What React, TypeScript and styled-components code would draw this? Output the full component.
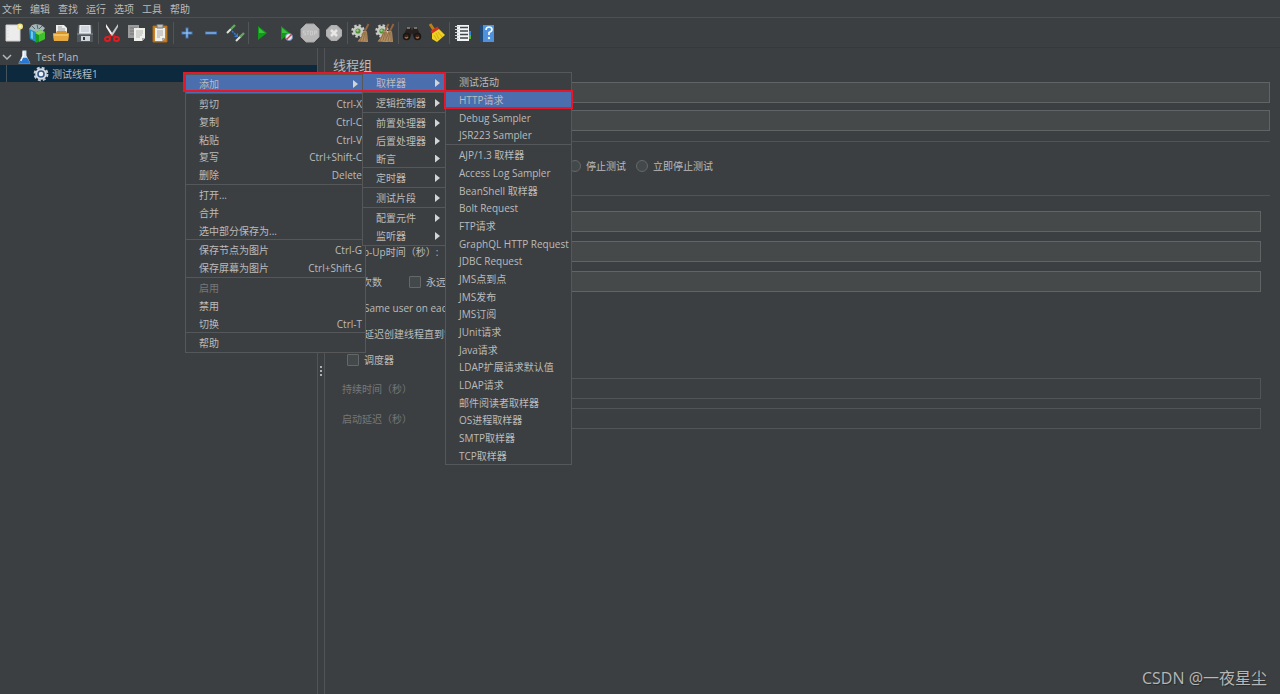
import React from 'react';
import styled, { createGlobalStyle, css } from 'styled-components';

const GlobalStyle = createGlobalStyle`
  *, *::before, *::after { box-sizing: border-box; }
  body {
    margin: 0;
    background: #3c3f41;
    color: #bbbbbb;
    font: 10px/16px "Open Sans", "Noto Sans CJK SC", sans-serif;
  }
  button, input { font: inherit; color: inherit; margin: 0; }
  button { background: none; border: 0; padding: 0; text-align: left; white-space: nowrap; }
`;

const Page = styled.div`
  position: relative;
  display: flex;
  flex-direction: column;
  min-height: 100vh;
  overflow: hidden;
`;

const MenuBar = styled.nav`
  display: flex;
  height: 18px;
  padding-left: 2px;
  border-bottom: 1px solid #4d5052;
`;

const MenuBarButton = styled.button`
  width: 28px;
`;

const Toolbar = styled.div`
  display: flex;
  align-items: center;
  height: 30px;
  padding-left: 1px;
  border-bottom: 1px solid #36393b;
`;

const ToolButton = styled.button`
  display: flex;
  align-items: center;
  justify-content: center;
  width: 24px;
  height: 24px;
`;

const ToolDivider = styled.span`
  width: 1px;
  height: 22px;
  margin: 0 1px;
  background: #525557;
`;

const Main = styled.main`
  display: flex;
  flex: 1;
`;

const Tree = styled.ul`
  flex: none;
  width: 317px;
  margin: 0;
  padding: 0;
  list-style: none;
`;

const TreeRow = styled.li<{ $child?: boolean }>`
  display: flex;
  align-items: center;
  gap: 4px;
  height: 17px;
  padding-left: 2px;
  ${(p) =>
    p.$child &&
    css`
      gap: 3px;
      padding-left: 6px;
      background: #0d293e;
    `}
`;

const TreeGuide = styled.span`
  width: 1px;
  height: 100%;
  margin-right: 23px;
  background: #46535c;
`;

const Splitter = styled.div`
  display: flex;
  flex: none;
  flex-direction: column;
  align-items: center;
  justify-content: center;
  gap: 2px;
  width: 8px;
  border: solid #525557;
  border-width: 0 1px;
`;

const SplitterDot = styled.span`
  width: 2px;
  height: 2px;
  background: #aeb0b1;
`;

const Panel = styled.section`
  flex: 1;
  min-width: 0;
  padding: 7px 10px 0 8px;
`;

const Title = styled.h1`
  margin: 0 0 7px;
  font-size: 13px;
  line-height: 20px;
  font-weight: 400;
`;

const Header = styled.div`
  display: grid;
  gap: 7px;
  padding-left: 120px;
`;

const TextField = styled.input`
  display: block;
  flex: 1;
  width: 100%;
  min-width: 0;
  height: 21px;
  padding: 0 4px;
  border: 1px solid #616464;
  border-radius: 0;
  background: #45494a;
  outline: 0;
  &:disabled {
    border-color: #525557;
    background: transparent;
  }
`;

const ActionGroup = styled.div`
  display: flex;
  align-items: center;
  gap: 10px;
  height: 55px;
  margin-top: 10px;
  padding: 0 0 6px 236px;
  border: solid #515355;
  border-width: 1px 0;
`;

const Choice = styled.label`
  display: flex;
  align-items: center;
  gap: 5px;
  white-space: nowrap;
`;

const Radio = styled.input`
  appearance: none;
  width: 12px;
  height: 12px;
  border: 1px solid #646868;
  border-radius: 50%;
  background: #43494a;
`;

const Checkbox = styled.input`
  appearance: none;
  width: 12px;
  height: 12px;
  border: 1px solid #646868;
  border-radius: 1px;
  background: #43494a;
`;

const Properties = styled.div`
  display: grid;
  gap: 9px;
  padding: 15px 9px 0;
`;

const FieldRow = styled.div<{ $disabled?: boolean }>`
  display: flex;
  align-items: center;
  height: 21px;
  color: ${(p) => (p.$disabled ? '#777777' : '#bbbbbb')};
`;

const FieldLabel = styled.label<{ $narrow?: boolean }>`
  flex: none;
  width: ${(p) => (p.$narrow ? 67 : 110)}px;
  white-space: nowrap;
`;

const Forever = styled(Choice)`
  width: 43px;
`;

const OptionList = styled.div`
  display: grid;
  grid-auto-rows: 26px;
  margin: -6px 0 -4px;
  padding-left: 5px;
`;

const Popup = styled.div<{ $left: number; $top: number; $width: number }>`
  position: absolute;
  left: ${(p) => p.$left}px;
  top: ${(p) => p.$top}px;
  width: ${(p) => p.$width}px;
  border: 1px solid #555759;
  background: #3c3f41;
`;

const PopupGroup = styled.div`
  display: grid;
  grid-auto-rows: 18px 18px 17px;
  & + & {
    padding-top: 1px;
    border-top: 1px solid #55585a;
  }
`;

const PopupItem = styled.button<{ $active?: boolean }>`
  display: flex;
  align-items: center;
  justify-content: space-between;
  padding: 0 3px 0 13px;
  background: ${(p) => (p.$active ? '#4b6eaf' : 'transparent')};
  &:disabled { color: #777777; }
`;

const Arrow = styled.span`
  width: 5px;
  height: 8px;
  margin-right: 4px;
  background: #d3d4d5;
  clip-path: polygon(0 0, 100% 50%, 0 100%);
`;

const Highlight = styled.div<{ $left: number; $top: number; $width: number; $height: number }>`
  position: absolute;
  left: ${(p) => p.$left}px;
  top: ${(p) => p.$top}px;
  width: ${(p) => p.$width}px;
  height: ${(p) => p.$height}px;
  border: 2px solid #e5182a;
  pointer-events: none;
`;

const Watermark = styled.div`
  position: absolute;
  right: 13px;
  bottom: 4px;
  color: #b4b6b7;
  font-size: 16px;
  line-height: 24px;
  text-shadow: 1px 1px 1px #2a2c2d;
`;

const Svg = styled.svg`
  display: block;
  flex: none;
`;

const Icon = ({ children, size = 20 }: { children: React.ReactNode; size?: number }) => (
  <Svg width={size} height={size} viewBox="0 0 20 20" aria-hidden="true">
    {children}
  </Svg>
);

const Gear = () => (
  <>
    <circle cx="7" cy="8" r="5" fill="#c9cbc6" />
    <circle cx="7" cy="8" r="5.500" fill="none" stroke="#c9cbc6" strokeWidth="2.500" strokeDasharray="2.400 1.900" />
    <circle cx="7" cy="8" r="2.600" fill="#4e9135" />
    <circle cx="6.500" cy="7.500" r="1.200" fill="#a3c88f" />
  </>
);

const Brush = ({ x = 0 }: { x?: number }) => (
  <g transform={`translate(${x} 0)`}>
    <path d="M17.500 1 14 8" stroke="#93643f" strokeWidth="1.800" />
    <path d="M12.500 7.500 16 8.500 17 19 6.500 18.500 10 14Z" fill="#b58e62" />
    <path d="M13 9 9 18M14 9 12 18M15 9 15 18" stroke="#80613d" strokeWidth=".7" />
  </g>
);

const icons: Record<string, React.ReactNode> = {
  new: (
    <>
      <path d="M3 2h14v16H3z" fill="#ececec" stroke="#cfcfcf" />
      <path d="M5 4v12" stroke="#d5d5d5" strokeDasharray="1 2" />
      <circle cx="17" cy="3.500" r="3" fill="#f2e37c" />
      <circle cx="17" cy="3.500" r="1.200" fill="#fffbe0" />
    </>
  ),
  templates: (
    <>
      <path d="M2 6 5 2l4-1 5 1 4 3-3 4-9 1Z" fill="#a4b6b7" />
      <path d="M5 3 8 6M10 1.500 11 6M15 3 12 6" stroke="#4f6265" />
      <path d="M2 6 9 9v10l-6-3Z" fill="#2592cc" />
      <path d="m4 8 2 1v7l-2-1Z" fill="#6cc8ee" />
      <path d="m8 10 5-3 5 2v7l-9 4Z" fill="#169c1f" />
      <path d="m8 10 5-3 5 2-6 3Z" fill="#8ed35d" />
      <path d="m12 12 6-3v7l-6 3Z" fill="#3fc02c" />
    </>
  ),
  open: (
    <>
      <path d="M5 2h8l3 3v8H5Z" fill="#eeeeed" />
      <path d="M7 4h4M7 6h7M7 8h7" stroke="#9b9b9b" />
      <path d="M2 10h3l1-2h9l1 2h2l-1 8H3Z" fill="#d8932a" />
      <path d="M2 11h16l-1 7H3Z" fill="#e5a940" />
      <path d="M3 12h14" stroke="#ffdc83" />
    </>
  ),
  save: (
    <>
      <path d="M3 2h14l1 9v8H2v-8Z" fill="#50575d" />
      <path d="M4.500 2h11l.5 9H4Z" fill="#e6e9ed" />
      <path d="M6 4h8M6 6h8M6 8h8" stroke="#b9c0c6" />
      <path d="M2 11h16" stroke="#8b949c" />
      <path d="M6 13h9v5H6Z" fill="#cfd5d9" />
      <path d="M8 14h2v3H8Z" fill="#343b42" />
    </>
  ),
  cut: (
    <>
      <path d="m4 1 7.500 11-2 1L4 4Z" fill="#f3f3f3" />
      <path d="m16 1-7.500 11 2 1L16 4Z" fill="#c7c7c7" />
      <path d="m9 12-2 2M11 12l2 2" stroke="#d0181c" strokeWidth="2.500" />
      <ellipse cx="5.500" cy="16" rx="2.500" ry="2" fill="none" stroke="#e01c21" strokeWidth="2" />
      <ellipse cx="14.500" cy="16" rx="2.500" ry="2" fill="none" stroke="#e01c21" strokeWidth="2" />
    </>
  ),
  copy: (
    <>
      <path d="M2 2h11v13H2Z" fill="#9a9b9a" />
      <path d="M4 5h7M4 8h7M4 11h7" stroke="#777" />
      <path d="M8 5h11v10l-3 3H8Z" fill="#efefec" />
      <path d="M10 8h7M10 10h7M10 12h6M10 14h4" stroke="#b5b5b1" />
      <path d="M16 18v-3h3Z" fill="#a7a7a4" />
    </>
  ),
  paste: (
    <>
      <path d="M3 3h14v16H3Z" fill="#c98426" stroke="#a5681b" />
      <path d="M5 5h10v10l-3 3H5Z" fill="#efefec" />
      <path d="M7 1.500h6V5H7Z" fill="#c1c1bd" stroke="#777" />
      <path d="M7 8h6M7 10h6M7 12h6M7 14h3" stroke="#a8a8a5" />
      <path d="M12 18v-3h3Z" fill="#aaa" />
    </>
  ),
  plus: (
    <>
      <path d="M10 4.500v11M4.500 10h11" stroke="#3f77bb" strokeWidth="3" />
      <path d="M10 5.500v9M5.500 10h9" stroke="#a5cdf3" strokeWidth="1" />
    </>
  ),
  minus: (
    <>
      <path d="M4 10h12" stroke="#3f77bb" strokeWidth="3" />
      <path d="M5 10h10" stroke="#9fc6ec" strokeWidth="1" />
    </>
  ),
  toggle: (
    <>
      <path d="m2 10 4-4M11 18l5-5" stroke="#dce2dc" strokeWidth="2" />
      <path d="m6 6 4-4M15 14l4-4" stroke="#63a85b" strokeWidth="2.400" />
      <path d="m7 8 4 4" stroke="#2e7ede" strokeWidth="1.500" strokeDasharray="2 1" />
      <path d="m13 10v4H9Z" fill="#2e7ede" />
    </>
  ),
  start: (
    <>
      <path d="m6 3 9 7-9 7Z" fill="#119b1b" />
      <path d="m7 5 6 5H7Z" fill="#3dc23f" />
    </>
  ),
  startNoPause: (
    <>
      <path d="m5 3 9 7-9 7Z" fill="#119b1b" />
      <path d="m6 5 6 5H6Z" fill="#3dc23f" />
      <circle cx="13" cy="14" r="3.500" fill="#e4edf5" stroke="#698fbb" />
      <path d="m10.500 16.500 5-5" stroke="#d83942" strokeWidth="1.500" />
    </>
  ),
  stop: (
    <>
      <path d="M6 1h8l5 5v8l-5 5H6l-5-5V6Z" fill="#b7b7b7" stroke="#a6a6a6" />
      <path d="M5.500 8h-2v2h2v2h-2M6.500 8h3M8 8v4M10.500 8h2v4h-2ZM14.500 12V8h2v2h-2" fill="none" stroke="#cfcfcf" strokeWidth=".8" />
    </>
  ),
  shutdown: (
    <>
      <path d="M7 2.500h6L17.500 7v6L13 17.500H7L2.500 13V7Z" fill="#b6b6b6" stroke="#adadad" />
      <path d="m7 7 6 6M13 7l-6 6" stroke="#e6e6e6" strokeWidth="2.500" />
    </>
  ),
  clear: (
    <>
      <Gear />
      <Brush />
    </>
  ),
  clearAll: (
    <>
      <Gear />
      <Brush x={-4} />
      <Brush x={1} />
    </>
  ),
  search: (
    <>
      <path d="M5 5h4l1 3 1-3h4l4 8-3 4-4-2-2-5-2 5-4 2-3-4Z" fill="#26211e" />
      <path d="M5 5h3M12 5h3" stroke="#77716c" strokeWidth="2" />
      <circle cx="4.500" cy="13.500" r="3" fill="#372317" stroke="#181717" strokeWidth="1.500" />
      <circle cx="15.500" cy="13.500" r="3" fill="#372317" stroke="#181717" strokeWidth="1.500" />
      <path d="M3 14q1 2 3 0M14 14q1 2 3 0" fill="none" stroke="#b56830" strokeWidth="1.300" />
    </>
  ),
  broom: (
    <>
      <path d="m4 1 4 6" stroke="#b78018" strokeWidth="3" />
      <path d="m4.500 8 7-4.500 1.500 2.500-7 4.500Z" fill="#d42f22" />
      <path d="m6 10.500 7-4.500 6 6-8 7-5-3Z" fill="#f0d021" />
      <path d="m10 10 3 6M12 9l4 5M8 12l3 5" stroke="#d0ac16" />
    </>
  ),
  functions: (
    <>
      <path d="M4 2h12v16H4Z" fill="#f1f3f5" />
      <path d="M7 4.500h8M7 8h8M7 11.500h8M7 15h8" stroke="#3f454a" strokeWidth="1.500" />
      <path d="M2 3.500h4M2 6.500h4M2 9.500h4M2 12.500h4M2 15.500h4" stroke="#cbd1d6" />
      <path d="M16 8h2v4h-2Z" fill="#3683d4" />
      <path d="M16 12h2v4h-2Z" fill="#56b638" />
    </>
  ),
  help: (
    <>
      <path d="M4 2h13v17H4Z" fill="#4d91df" />
      <path d="M3 2h3v17H3Z" fill="#234976" />
      <path d="M9 7q0-3 3-3t3 2.500q0 2-3 3V12" fill="none" stroke="#f4f8ff" strokeWidth="1.700" />
      <circle cx="12" cy="15" r="1.200" fill="#f4f8ff" />
    </>
  ),
};

const toolGroups: [string, string][][] = [
  [['new', '新建'], ['templates', '模板'], ['open', '打开'], ['save', '保存']],
  [['cut', '剪切'], ['copy', '复制'], ['paste', '粘贴']],
  [['plus', '展开'], ['minus', '收起'], ['toggle', '切换']],
  [['start', '启动'], ['startNoPause', '无间隔启动'], ['stop', '停止'], ['shutdown', '关闭']],
  [['clear', '清除'], ['clearAll', '清除全部']],
  [['search', '查找'], ['broom', '重置查找']],
  [['functions', '函数助手'], ['help', '帮助']],
];

interface Entry {
  text: string;
  keys?: string;
  sub?: boolean;
  active?: boolean;
  disabled?: boolean;
}

const sub = (text: string, active = false): Entry => ({ text, sub: true, active });
const item = (text: string, keys?: string): Entry => ({ text, keys });

const contextMenu: Entry[][] = [
  [sub('添加', true)],
  [
    item('剪切', 'Ctrl-X'),
    item('复制', 'Ctrl-C'),
    item('粘贴', 'Ctrl-V'),
    item('复写', 'Ctrl+Shift-C'),
    item('删除', 'Delete'),
  ],
  [item('打开...'), item('合并'), item('选中部分保存为...')],
  [item('保存节点为图片', 'Ctrl-G'), item('保存屏幕为图片', 'Ctrl+Shift-G')],
  [{ text: '启用', disabled: true }, item('禁用'), item('切换', 'Ctrl-T')],
  [item('帮助')],
];

const addMenu: Entry[][] = [
  [sub('取样器', true)],
  [sub('逻辑控制器')],
  [sub('前置处理器'), sub('后置处理器'), sub('断言')],
  [sub('定时器')],
  [sub('测试片段')],
  [sub('配置元件'), sub('监听器')],
];

const samplerMenu: Entry[][] = [
  [item('测试活动'), { text: 'HTTP请求', active: true }, item('Debug Sampler'), item('JSR223 Sampler')],
  [
    'AJP/1.3 取样器',
    'Access Log Sampler',
    'BeanShell 取样器',
    'Bolt Request',
    'FTP请求',
    'GraphQL HTTP Request',
    'JDBC Request',
    'JMS点到点',
    'JMS发布',
    'JMS订阅',
    'JUnit请求',
    'Java请求',
    'LDAP扩展请求默认值',
    'LDAP请求',
    '邮件阅读者取样器',
    'OS进程取样器',
    'SMTP取样器',
    'TCP取样器',
  ].map((text) => item(text)),
];

interface MenuProps {
  groups: Entry[][];
  left: number;
  top: number;
  width: number;
}

const Menu = ({ groups, left, top, width }: MenuProps) => (
  <Popup role="menu" $left={left} $top={top} $width={width}>
    {groups.map((entries, index) => (
      <PopupGroup key={index}>
        {entries.map((entry) => (
          <PopupItem key={entry.text} role="menuitem" $active={entry.active} disabled={entry.disabled}>
            <span>{entry.text}</span>
            {entry.keys && <span>{entry.keys}</span>}
            {entry.sub && <Arrow />}
          </PopupItem>
        ))}
      </PopupGroup>
    ))}
  </Popup>
);

export default function App() {
  return (
    <Page>
      <GlobalStyle />
      <MenuBar>
        {['文件', '编辑', '查找', '运行', '选项', '工具', '帮助'].map((name) => (
          <MenuBarButton key={name}>{name}</MenuBarButton>
        ))}
      </MenuBar>

      <Toolbar>
        {toolGroups.map((group, index) => (
          <React.Fragment key={index}>
            {index > 0 && <ToolDivider />}
            {group.map(([icon, label]) => (
              <ToolButton key={icon} aria-label={label}>
                <Icon>{icons[icon]}</Icon>
              </ToolButton>
            ))}
          </React.Fragment>
        ))}
      </Toolbar>

      <Main>
        <Tree>
          <TreeRow>
            <Icon size={10}>
              <path d="m2 6 8 8 8-8" fill="none" stroke="#b5b7b8" strokeWidth="3" />
            </Icon>
            <Icon size={16}>
              <path d="M8 2h5v6l5 10H3L8 8Z" fill="#dbe9f4" />
              <path d="m7 11h7l4 7H3Z" fill="#2878d2" />
              <path d="M9 3v6l-3 6" fill="none" stroke="#fff" strokeWidth="1.500" />
            </Icon>
            <span>Test Plan</span>
          </TreeRow>
          <TreeRow $child>
            <TreeGuide />
            <Icon size={16}>
              <circle cx="10" cy="10" r="8" fill="none" stroke="#c6ced8" strokeWidth="2.500" strokeDasharray="3.600 2.680" />
              <circle cx="10" cy="10" r="6" fill="#355785" stroke="#d5dbe2" strokeWidth="2.500" />
              <circle cx="10" cy="10" r="2.800" fill="#eef2f7" />
            </Icon>
            <span>测试线程1</span>
          </TreeRow>
        </Tree>

        <Splitter>
          <SplitterDot />
          <SplitterDot />
          <SplitterDot />
        </Splitter>

        <Panel>
          <Title>线程组</Title>
          <Header>
            <TextField aria-label="名称" />
            <TextField aria-label="注释" />
          </Header>

          <ActionGroup>
            <Choice>
              <Radio type="radio" name="on-error" />
              停止测试
            </Choice>
            <Choice>
              <Radio type="radio" name="on-error" />
              立即停止测试
            </Choice>
          </ActionGroup>

          <Properties>
            <FieldRow>
              <FieldLabel />
              <TextField aria-label="线程数" />
            </FieldRow>
            <FieldRow>
              <FieldLabel htmlFor="ramp-up">Ramp-Up时间（秒）:</FieldLabel>
              <TextField id="ramp-up" />
            </FieldRow>
            <FieldRow>
              <FieldLabel htmlFor="loops" $narrow>循环次数</FieldLabel>
              <Forever>
                <Checkbox type="checkbox" />
                永远
              </Forever>
              <TextField id="loops" />
            </FieldRow>
            <OptionList>
              <Choice>
                <Checkbox type="checkbox" />
                Same user on each iteration
              </Choice>
              <Choice>
                <Checkbox type="checkbox" />
                延迟创建线程直到需要
              </Choice>
              <Choice>
                <Checkbox type="checkbox" />
                调度器
              </Choice>
            </OptionList>
            <FieldRow $disabled>
              <FieldLabel htmlFor="duration">持续时间（秒）</FieldLabel>
              <TextField id="duration" disabled />
            </FieldRow>
            <FieldRow $disabled>
              <FieldLabel htmlFor="delay">启动延迟（秒）</FieldLabel>
              <TextField id="delay" disabled />
            </FieldRow>
          </Properties>
        </Panel>
      </Main>

      <Menu groups={contextMenu} left={185} top={74} width={181} />
      <Menu groups={addMenu} left={362} top={73} width={86} />
      <Menu groups={samplerMenu} left={445} top={72} width={127} />
      <Highlight $left={183} $top={72} $width={263} $height={20} />
      <Highlight $left={444} $top={90} $width={129} $height={19} />

      <Watermark>CSDN @一夜星尘</Watermark>
    </Page>
  );
}
